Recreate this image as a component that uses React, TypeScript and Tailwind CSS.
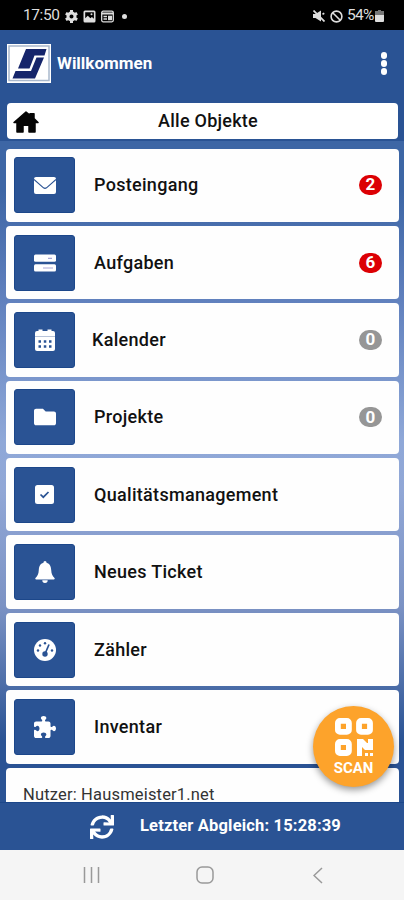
import type { ReactNode } from "react";
import { FaFolder, FaSync } from "react-icons/fa";
import { FaPuzzlePiece } from "react-icons/fa6";

type Entry = {
  label: string;
  icon: ReactNode;
  count?: number;
};

function MailIcon() {
  return (
    <svg viewBox="0 0 22 17" className="h-[17px] w-[22px]">
      <rect width="22" height="17" rx="2" fill="#fff" />
      <path d="M0 2.5l9.5 8.300q1.500 1.200 3 0L22 2.500" fill="none" stroke="#2a5394" strokeWidth="1.100" />
    </svg>
  );
}

function TasksIcon() {
  return (
    <svg viewBox="0 0 22 18" className="h-[18px] w-[22px]">
      <rect x="0" y="0.5" width="22" height="7.2" rx="1.5" fill="#fff" />
      <rect x="0" y="10.3" width="22" height="7.2" rx="1.5" fill="#fff" />
      <path d="M14 4.300h4M9 14h10" stroke="#a9a5d6" strokeWidth="1.2" />
    </svg>
  );
}

function CalendarIcon() {
  return (
    <svg viewBox="0 0 20 22" className="h-[22px] w-[20px]">
      <path d="M3.500 2V.5h4V2h5V.5h4V2H18a2 2 0 0 1 2 2v3H0V4a2 2 0 0 1 2-2z" fill="#fff" />
      <path d="M0 7h20v13a2 2 0 0 1-2 2H2a2 2 0 0 1-2-2z" fill="#fff" />
      <path d="M0 7.500h20" stroke="#b8c4da" strokeWidth="1" />
      <path
        d="M3.500 12.500h2.500M8.800 12.500h2.500M14 12.500h2.500M3.500 17.500h2.500M8.800 17.500h2.500M14 17.500h2.500"
        stroke="#2a5394"
        strokeWidth="2.3"
      />
    </svg>
  );
}

function CheckIcon() {
  return (
    <svg viewBox="0 0 19 19" className="size-[19px]">
      <rect width="19" height="19" rx="2.5" fill="#fff" />
      <path d="M5.500 9.500l2.800 2.700L13.500 7" fill="none" stroke="#2a5394" strokeWidth="1.7" />
    </svg>
  );
}

function BellIcon() {
  return (
    <svg viewBox="0 0 20 22" className="h-[22px] w-[20px]">
      <path
        d="M10 0c1 0 1.500.8 1.500 1.700C15 2.500 16 5.500 16.200 9c.2 4 1.300 6 3.300 8 .5.700.2 1.500-.7 1.500H1.200c-.9 0-1.200-.8-.7-1.500 2-2 3.100-4 3.300-8C4 5.500 5 2.500 8.500 1.700 8.500.8 9 0 10 0z"
        fill="#fff"
      />
      <path d="M7.300 19.200h5.400a2.700 2.700 0 0 1-5.400 0z" fill="#fff" />
    </svg>
  );
}

function GaugeIcon() {
  return (
    <svg viewBox="0 0 22 22" className="size-[22px]">
      <circle cx="11" cy="11" r="11" fill="#fff" />
      <g fill="#2a5394">
        <circle cx="4" cy="11.5" r="1.2" />
        <circle cx="6" cy="6.5" r="1.2" />
        <circle cx="11" cy="4.3" r="1.2" />
        <circle cx="18" cy="11.5" r="1.2" />
        <circle cx="11" cy="15" r="2.7" />
      </g>
      <path d="M11 15L15 5.500" stroke="#2a5394" strokeWidth="1.7" />
    </svg>
  );
}

const entries: Entry[] = [
  { label: "Posteingang", icon: <MailIcon />, count: 2 },
  { label: "Aufgaben", icon: <TasksIcon />, count: 6 },
  { label: "Kalender", icon: <CalendarIcon />, count: 0 },
  { label: "Projekte", icon: <FaFolder size={22} />, count: 0 },
  { label: "Qualitätsmanagement", icon: <CheckIcon /> },
  { label: "Neues Ticket", icon: <BellIcon /> },
  { label: "Zähler", icon: <GaugeIcon /> },
  { label: "Inventar", icon: <FaPuzzlePiece size={22} /> },
];

function StatusBar() {
  return (
    <div className="flex h-[30px] shrink-0 items-center bg-black pt-[2px] pr-[20px] pl-[23px] text-[#dedede]">
      <span className="w-[37px] text-[15.5px] tracking-[-0.4px] whitespace-nowrap">17:50</span>
      <svg viewBox="0 0 24 24" className="ml-[5px] size-[13px]">
        <circle cx="12" cy="12" r="6.5" fill="none" stroke="currentColor" strokeWidth="5.5" />
        <path
          d="M12 0v5M12 19v5M1.600 6l4.300 2.500M18.100 15.500l4.300 2.500M22.400 6l-4.300 2.500M5.900 15.500L1.600 18"
          stroke="currentColor"
          strokeWidth="5.5"
        />
      </svg>
      <svg viewBox="0 0 13 13" className="ml-[5px] size-[13px]">
        <path
          fill="currentColor"
          fillRule="evenodd"
          d="M2 .5h9A1.500 1.500 0 0 1 12.500 2v9a1.500 1.500 0 0 1-1.500 1.500H2A1.500 1.500 0 0 1 .5 11V2A1.500 1.500 0 0 1 2 .5zM2.200 2.200v6l2.600-2.500 2.600 2.500 1.500-1.300 2 1.800V2.200z"
        />
        <circle cx="8.5" cy="4.2" r="1" fill="currentColor" />
      </svg>
      <svg viewBox="0 0 13 13" className="ml-[5px] size-[13px]">
        <rect x=".7" y="1.2" width="11.6" height="10.6" rx="1.5" fill="none" stroke="currentColor" strokeWidth="1.3" />
        <path d="M.7 3.500h11.600" stroke="currentColor" strokeWidth="2" />
        <path d="M2.500 6.500h3.500M2.500 9h3.500" stroke="currentColor" strokeWidth="1.3" />
        <rect x="7" y="5.7" width="4" height="4.5" fill="currentColor" />
      </svg>
      <span className="ml-[8px] size-[5px] rounded-full bg-[#dedede]" />
      <svg viewBox="0 0 12 12" className="ml-auto size-[12px]">
        <path d="M0 4h2.500L8 .5v11L2.500 8H0z" fill="currentColor" />
        <path d="M.5.500l11 11M9.500 4.200l1.800-1" stroke="currentColor" strokeWidth="1.7" />
      </svg>
      <svg viewBox="0 0 13 13" className="ml-[5px] size-[13px]">
        <circle cx="6.5" cy="6.5" r="5.4" fill="none" stroke="currentColor" strokeWidth="1.6" />
        <path d="M2.700 2.700l7.600 7.600" stroke="currentColor" strokeWidth="1.6" />
      </svg>
      <span className="ml-[4px] w-[28px] text-[15.5px] tracking-[-0.7px] whitespace-nowrap">54%</span>
      <svg viewBox="0 0 9 12" className="h-[12px] w-[9px]">
        <path d="M3 0h3v1h3v4H0V1h3z" fill="#777" />
        <path d="M0 5h9v6a1 1 0 0 1-1 1H1a1 1 0 0 1-1-1z" fill="currentColor" />
      </svg>
    </div>
  );
}

function Logo() {
  return (
    <svg viewBox="0 0 44 39" className="h-[39px] w-[44px]">
      <rect width="44" height="39" fill="#fff" />
      <rect x="2" y="2" width="40" height="34.5" fill="#fff" stroke="#a9b8cc" strokeWidth="1.5" />
      <path d="M19 5H39.500L37.500 11.500H27.500L22.500 24.500H11z" fill="#15256b" />
      <path d="M29.500 13.500H37L28 34.500H5.500L8.500 27H24z" fill="#15256b" />
    </svg>
  );
}

function Row({ label, icon, count }: Entry) {
  return (
    <li className="flex h-[73.4px] shrink-0 items-center rounded-[4px] bg-[#fefefe] pr-[17px] pl-[8px]">
      <div className="flex h-[56px] w-[61px] items-center justify-center rounded-[3px] border border-[#1c478a] bg-[#2a5394] text-white">
        {icon}
      </div>
      <span
        className={`text-[18px] leading-[24px] font-medium tracking-[0.3px] text-[#111] ${
          label === "Kalender" ? "ml-[17px]" : "ml-[19px]"
        }`}
      >
        {label}
      </span>
      {count !== undefined && (
        <span
          className={`ml-auto flex h-[20px] w-[23px] items-center justify-center rounded-full text-[17px] font-bold text-white ${
            count > 0 ? "bg-[#dc0004]" : "bg-[#969696]"
          }`}
        >
          {count}
        </span>
      )}
    </li>
  );
}

function ScanButton() {
  return (
    <button className="absolute top-[706px] left-[313px] flex size-[81px] flex-col items-center rounded-full bg-[#fda32b] pt-[12px] text-white shadow-[0_3px_7px_rgba(0,0,0,0.4)]">
      <svg viewBox="0 0 38 38" className="h-[38px] w-[38px]">
        <g fill="none" stroke="currentColor" strokeWidth="5.8">
          <rect x="2.9" y="2.9" width="11" height="11" rx="2" />
          <rect x="24" y="2.9" width="11" height="11" rx="2" />
          <rect x="2.9" y="24" width="11" height="11" rx="2" />
        </g>
        <path
          d="M22 21h6l4 4h1v-4h5v11h-8l-3-3v9h-5zM30 35h3v3h-3zM35 35h3v3h-3z"
          fill="currentColor"
        />
      </svg>
      <span className="mt-[4px] text-[15px] leading-[17px] font-bold">SCAN</span>
    </button>
  );
}

export default function App() {
  return (
    <div
      className="relative flex h-[900px] w-[404px] flex-col overflow-hidden bg-[#2a5394]"
      style={{ fontFamily: "Roboto, sans-serif" }}
    >
      <StatusBar />
      <header className="flex h-[73px] shrink-0 items-center pr-[17px] pb-[6px] pl-[7px] text-white">
        <Logo />
        <span className="ml-[6px] text-[17px] font-bold">Willkommen</span>
        <div className="ml-auto flex flex-col gap-[1.5px]">
          <span className="size-[6.5px] rounded-full bg-white" />
          <span className="size-[6.5px] rounded-full bg-white" />
          <span className="size-[6.5px] rounded-full bg-white" />
        </div>
      </header>
      <div className="mr-[6px] ml-[7px] flex h-[36px] shrink-0 items-center rounded-[4px] bg-white px-[6px]">
        <svg viewBox="0 0 26 24" preserveAspectRatio="none" className="h-[23px] w-[26px]">
          <path
            d="M13 2l4 3.500V4h4v5l4 4h-3v10h-6v-7h-6v7H4V13H1z"
            fill="#050505"
            stroke="#050505"
            strokeWidth="1.5"
            strokeLinejoin="round"
          />
        </svg>
        <span className="flex-1 pr-[15px] pb-[2px] text-center text-[18px] font-medium tracking-[0.25px] text-[#111]">
          Alle Objekte
        </span>
      </div>
      <main className="mt-[2px] flex-1 overflow-hidden bg-[linear-gradient(to_bottom,#3d66a5_0px,#3d66a5_50px,#5c7dbb_145px,#8fa8d8_300px,#91a7d6_350px,#7b92c4_465px,#2a5394_600px)] pr-[5px] pl-[6px]">
        <ul className="flex flex-col gap-[4px] pt-[7.5px]">
          {entries.map((e) => (
            <Row key={e.label} {...e} />
          ))}
          <li className="h-[60px] rounded-t-[4px] bg-[#fefefe] pt-[17px] pl-[17px] text-[16.5px] leading-[19px] tracking-[0.17px] text-[#333]">
            Nutzer: Hausmeister1.net
          </li>
        </ul>
      </main>
      <footer className="flex h-[48px] shrink-0 items-center border-t border-[#1c478a] bg-[#2a5394] pl-[90px] text-white">
        <FaSync size={24} />
        <span className="ml-[26px] text-[16.5px] font-bold tracking-[0.17px] whitespace-nowrap">
          Letzter Abgleich: 15:28:39
        </span>
      </footer>
      <nav className="flex h-[50px] shrink-0 items-center bg-[#f5f5f5] pl-[83px] text-[#999]">
        <svg viewBox="0 0 17 16" className="h-[16px] w-[17px]">
          <path d="M1.500 0v16M8.500 0v16M15.500 0v16" stroke="currentColor" strokeWidth="1.5" />
        </svg>
        <svg viewBox="0 0 18 18" className="ml-[96px] size-[18px]">
          <rect x="1" y="1" width="16" height="16" rx="5" fill="none" stroke="currentColor" strokeWidth="1.5" />
        </svg>
        <svg viewBox="0 0 10 17" className="ml-[99px] h-[17px] w-[10px]">
          <path d="M9 1L1 8.500 9 16" fill="none" stroke="currentColor" strokeWidth="1.5" />
        </svg>
      </nav>
      <ScanButton />
    </div>
  );
}
